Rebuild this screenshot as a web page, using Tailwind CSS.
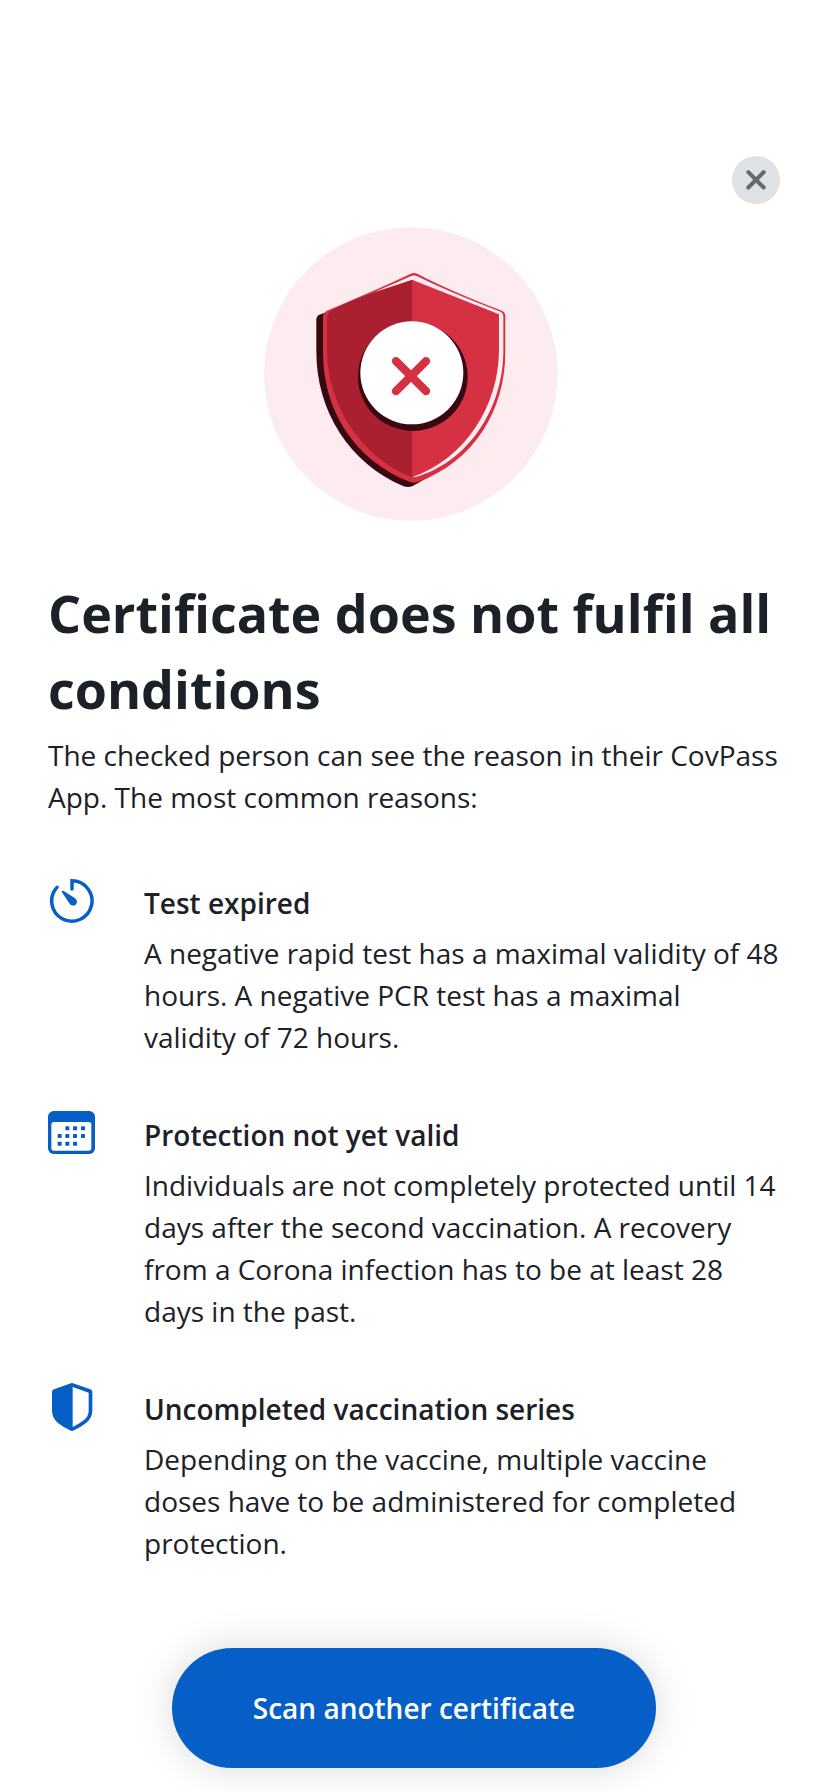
<!DOCTYPE html>
<html lang="en">
<head>
<meta charset="utf-8">
<title>Certificate check</title>
<script src="https://cdn.jsdelivr.net/npm/@tailwindcss/browser@4"></script>
</head>
<body class="bg-white">
<main class="flex h-[1792px] w-[828px] flex-col overflow-hidden bg-white px-12 pt-[156px] font-['Open_Sans','Noto_Sans',sans-serif] text-[28px] leading-[42px] text-[#1c2128]">
  <button class="size-12 shrink-0 self-end rounded-full bg-[#dee2e5]" aria-label="Close">
    <svg class="size-12" viewBox="36 33 144 144" fill="none" stroke="#636b6b" stroke-width="12" stroke-linecap="round"><path d="M85 81.500L131 127.500M131 81.500L85 127.500"/></svg>
  </button>

  <svg class="mt-[23px] ml-[216px] h-[294px] w-[294px] shrink-0" viewBox="42 36 882 882" aria-hidden="true">
    <circle cx="482.500" cy="477" r="440.500" fill="#fcecef"/>
    <path fill="#380910" d="M222 294L208 299Q199 303 199 315V410C199 590 300 745 459 813Q474 819 488 813L535 787L500 300Z"/>
    <path fill="#d63043" d="M482 176Q492 172 502 176Q590 223 752 286Q766 291 766 304V410C766 590 669 740 504 801Q492 806 480 801C315 735 219 590 219 410V305Q219 293 231 287Q390 220 482 176Z"/>
    <path fill="#fcecef" d="M372 232L482 184Q492 179 502 184Q590 228 748 289Q760 293 760 305V407C760 585 650 745 493 787L486 785L487 600L600 300L487 195Z"/>
    <path fill="#aa2030" d="M487 194V787C335 730 233 570 231 410V312Q231 294 245 286Q300 257 345 242Q400 224 487 194Z"/>
    <path fill="#d63043" d="M486 194L747 298V407C745 570 650 728 486 787Z"/>
    <ellipse cx="488.500" cy="485" rx="164.500" ry="163" fill="#380910"/>
    <circle cx="485.500" cy="473.500" r="154.500" fill="#fff"/>
    <path stroke="#d63043" stroke-width="25" stroke-linecap="round" d="M438 438.500L528 528.500M528 438.500L438 528.500"/>
  </svg>

  <h1 class="mt-[54px] text-[52px] leading-[76px] font-bold whitespace-nowrap">Certificate does not fulfil all<br>conditions</h1>
  <p class="mt-[7px] whitespace-nowrap">The checked person can see the reason in their CovPass<br>App. The most common reasons:</p>

  <ul class="mt-[58px] flex flex-col gap-[50px]">
    <li class="flex gap-12">
      <svg class="size-12 shrink-0" viewBox="24 18 144 144" aria-hidden="true">
        <path fill="none" stroke="#055fc6" stroke-width="10.500" stroke-linecap="round" stroke-linejoin="miter" d="M96 57V32.500A60.500 60.500 0 1 1 51 52"/>
        <path fill="#055fc6" d="M66 63Q68 61 71 63L104 84A12 12 0 1 1 88 100L66 67Q64 65 66 63Z"/>
      </svg>
      <div class="pt-1.5 whitespace-nowrap">
        <h2 class="font-semibold">Test expired</h2>
        <p class="mt-2">A negative rapid test has a maximal validity of 48<br>hours. A negative PCR test has a maximal<br>validity of 72 hours.</p>
      </div>
    </li>
    <li class="flex gap-12">
      <svg class="size-12 shrink-0" viewBox="24 24 144 144" fill="#055fc6" aria-hidden="true">
        <rect x="24" y="33" width="141" height="129" rx="17"/>
        <rect x="34" y="66" width="120" height="86" rx="8" fill="#fff"/>
        <g><rect x="76" y="79" width="12" height="12" rx="2"/><rect x="99" y="79" width="12" height="12" rx="2"/><rect x="123" y="79" width="12" height="12" rx="2"/>
        <rect x="53" y="102" width="12" height="12" rx="2"/><rect x="76" y="102" width="12" height="12" rx="2"/><rect x="99" y="102" width="12" height="12" rx="2"/><rect x="123" y="102" width="12" height="12" rx="2"/>
        <rect x="53" y="125" width="12" height="12" rx="2"/><rect x="76" y="125" width="12" height="12" rx="2"/><rect x="99" y="125" width="12" height="12" rx="2"/></g>
      </svg>
      <div class="pt-1.5 whitespace-nowrap">
        <h2 class="font-semibold">Protection not yet valid</h2>
        <p class="mt-2">Individuals are not completely protected until 14<br>days after the second vaccination. A recovery<br>from a Corona infection has to be at least 28<br>days in the past.</p>
      </div>
    </li>
    <li class="flex gap-12">
      <svg class="size-12 shrink-0 overflow-visible" viewBox="24 24 144 144" aria-hidden="true">
        <path fill="#055fc6" d="M93 28Q96 26 99 28L151 46Q157 48 157 54V110Q157 131 139 146Q122 160 99 170Q96 172 93 170Q70 160 53 146Q36 131 36 110V54Q36 48 42 46Z"/>
        <path fill="#fff" d="M98 39L146 56V110Q146 127 132 138Q118 149 98 159Z"/>
      </svg>
      <div class="pt-1.5 whitespace-nowrap">
        <h2 class="font-semibold">Uncompleted vaccination series</h2>
        <p class="mt-2">Depending on the vaccine, multiple vaccine<br>doses have to be administered for completed<br>protection.</p>
      </div>
    </li>
  </ul>

  <button class="mt-[84px] ml-[124px] h-[120px] w-[484px] shrink-0 rounded-full bg-[#055fc6] font-semibold whitespace-nowrap text-white shadow-[0_0_40px_rgba(0,0,0,0.15)]">Scan another certificate</button>
</main>
</body>
</html>
